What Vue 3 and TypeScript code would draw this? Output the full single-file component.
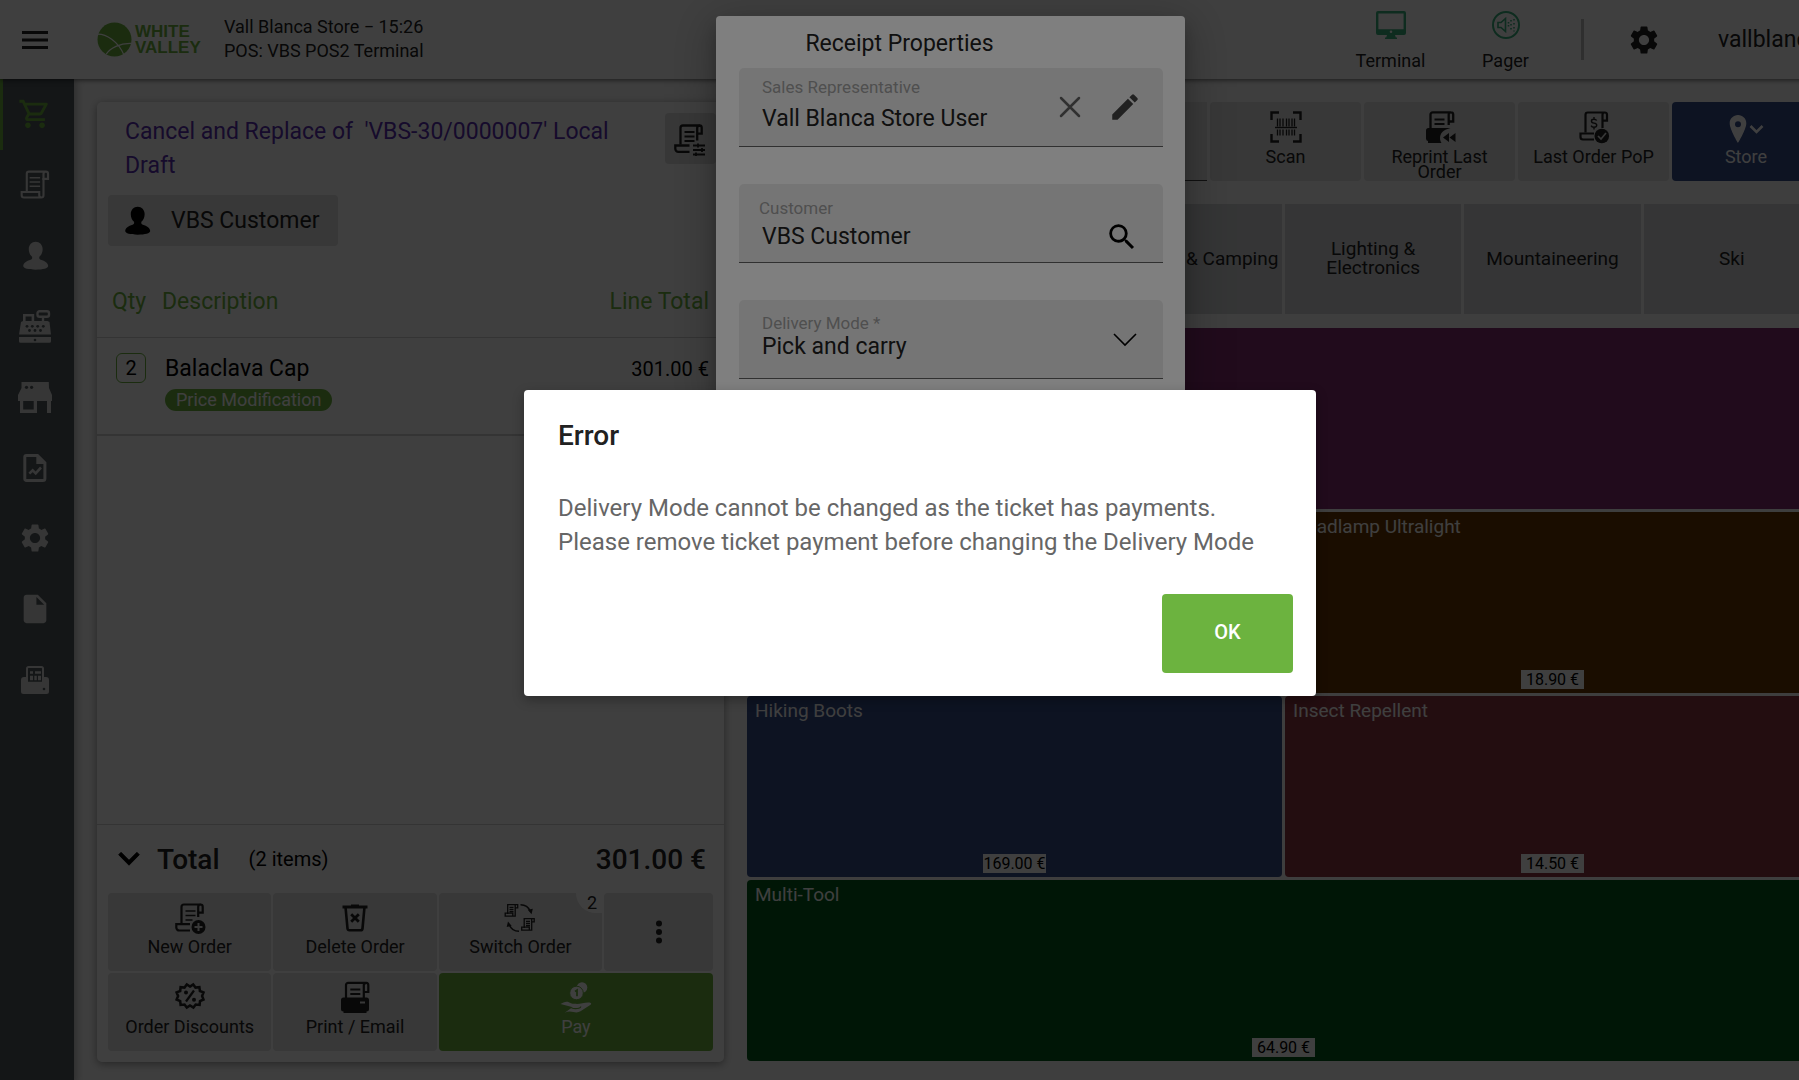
<script setup lang="ts">
import { ref } from 'vue'

interface NavItem {
  icon: string
  label: string
}

interface Product {
  name: string
  price: string
  color: string
  wide?: boolean
}

const navItems: NavItem[] = [
  { icon: 'cart', label: 'Sale' },
  { icon: 'scroll', label: 'Orders' },
  { icon: 'person', label: 'Customers' },
  { icon: 'register', label: 'Cash register' },
  { icon: 'store', label: 'Store' },
  { icon: 'report', label: 'Reports' },
  { icon: 'gear', label: 'Settings' },
  { icon: 'file', label: 'Documents' },
  { icon: 'fiscal', label: 'Fiscal printer' },
]

const tools: NavItem[] = [
  { icon: 'scan', label: 'Scan' },
  { icon: 'reprint', label: 'Reprint Last Order' },
  { icon: 'pop', label: 'Last Order PoP' },
]

const categories: string[] = [
  'Best Sellers',
  'Clothing',
  'Trekking & Camping',
  'Lighting & Electronics',
  'Mountaineering',
  'Ski',
]

const products: Product[] = [
  { name: 'Balaclava Cap', price: '150.50 €', color: '#842c70', wide: true },
  { name: 'Headlamp', price: '24.90 €', color: '#683400' },
  { name: 'Headlamp Ultralight', price: '18.90 €', color: '#683400' },
  { name: 'Hiking Boots', price: '169.00 €', color: '#344c88' },
  { name: 'Insect Repellent', price: '14.50 €', color: '#8c3440' },
  { name: 'Multi-Tool', price: '64.90 €', color: '#005818', wide: true },
]

const salesRep = ref('Vall Blanca Store User')
const customer = ref('VBS Customer')
const delivery = ref('Pick and carry')
</script>

<template>
  <div class="app">
    <svg class="sprite" aria-hidden="true">
      <symbol id="menu" viewBox="0 0 34 34">
        <path d="M4 9.500h26M4 17h26M4 24.500h26" stroke="currentColor" stroke-width="3" />
      </symbol>
      <symbol id="cart" viewBox="0 0 24 24">
        <path fill="currentColor" d="M15.550 13c.75 0 1.410-.41 1.750-1.030l3.580-6.490A.996.996 0 0 0 20.010 4H5.210l-.94-2H1v2h2l3.600 7.590-1.350 2.440C4.520 15.370 5.480 17 7 17h12v-2H7l1.100-2h7.450zM6.160 6h12.150l-2.760 5H8.530L6.160 6zM7 18c-1.100 0-1.990.9-1.990 2S5.900 22 7 22s2-.9 2-2-.9-2-2-2zm10 0c-1.100 0-1.990.9-1.990 2s.89 2 1.990 2 2-.9 2-2-.9-2-2-2z" />
      </symbol>
      <symbol id="scroll" viewBox="0 0 24 24">
        <g fill="none" stroke="currentColor" stroke-width="1.500">
          <path d="M6.200 16.800V4.100a1.500 1.500 0 0 1 1.500-1.500h12a1.500 1.500 0 0 1 1.500 1.500v3.600H18V4.200a1.600 1.600 0 0 1 1.600-1.600" />
          <path d="M18 7v12.200a1.600 1.600 0 0 1-1.600 1.600H4.200a1.600 1.600 0 0 1-1.600-1.600v-2.300H15v2.400a1.500 1.500 0 0 0 1.500 1.500" />
          <path d="M8.200 6.900h7.400M8.200 9.900h7.400M8.200 12.900h7.400" stroke-width="1.100" />
        </g>
      </symbol>
      <symbol id="person" viewBox="0 0 24 24">
        <path fill="currentColor" d="M12.500 2c2.800 0 4.900 2.200 4.900 5.200 0 2.300-1 4.200-2.300 5.400-.3 1.200.1 1.800 1 2.100 2.900.7 5.200 2.400 5.200 4.400 0 1.600-3.600 2.600-8.800 2.600s-8.800-1-8.800-2.600c0-2 2.300-3.700 5.200-4.400.9-.3 1.300-.9 1-2.100-1.300-1.200-2.300-3.100-2.300-5.400C7.600 4.200 9.700 2 12.500 2z" />
      </symbol>
      <symbol id="register" viewBox="0 0 34 34">
        <g fill="none" stroke="currentColor">
          <rect x="19.500" y="2.200" width="11.500" height="5.600" rx="2" stroke-width="2.400" />
          <path d="M25 8v5" stroke-width="2.400" />
          <path d="M6.300 14V6.300h8.600V14" stroke-width="2.600" />
        </g>
        <path fill="currentColor" d="M5 12h24.500l2 1L33 25.500H1L3 13zM1 28h32v4.200a1.500 1.500 0 0 1-1.500 1.500h-29A1.500 1.500 0 0 1 1 32.200z" />
        <g fill="var(--hole)">
          <circle cx="9" cy="17.300" r="1.400" /><circle cx="14.300" cy="17.300" r="1.400" /><circle cx="19.700" cy="17.300" r="1.400" /><circle cx="25.300" cy="17.300" r="1.400" />
          <circle cx="11.500" cy="21.500" r="1.400" /><circle cx="17" cy="21.500" r="1.400" /><circle cx="22.500" cy="21.500" r="1.400" /><circle cx="17" cy="31" r="1.300" />
        </g>
      </symbol>
      <symbol id="store" viewBox="0 0 34 34">
        <path fill="currentColor" fill-rule="evenodd" d="M3.500 2h27.300L31 8l3 7v6h-1v12h-4V21H19v12H2V21H0v-6l3.500-7zM5.200 21v8.500h10.500V21z" />
        <circle cx="8.500" cy="7.300" r="1.600" fill="var(--hole)" /><circle cx="13.600" cy="7.300" r="1.600" fill="var(--hole)" />
      </symbol>
      <symbol id="report" viewBox="0 0 34 34">
        <path d="M8.300 4.500h11.200l7.400 7.400v15.600a2 2 0 0 1-2 2H8.300a1.500 1.500 0 0 1-1.500-1.500V6a1.500 1.500 0 0 1 1.500-1.500z" fill="none" stroke="currentColor" stroke-width="3" />
        <path d="M18.300 4l9 9h-9z" fill="currentColor" />
        <path d="M11.300 22.700l3.400-3.400 3 3 5.300-5.800" fill="none" stroke="currentColor" stroke-width="2.600" />
      </symbol>
      <symbol id="gear" viewBox="0 0 24 24">
        <path fill="currentColor" d="M19.140 12.940c.04-.3.060-.61.060-.94 0-.32-.02-.64-.07-.94l2.030-1.580a.49.49 0 0 0 .12-.61l-1.920-3.320a.488.488 0 0 0-.59-.22l-2.390.96c-.5-.38-1.030-.7-1.620-.94l-.36-2.540a.484.484 0 0 0-.48-.41h-3.840c-.24 0-.43.17-.47.41l-.36 2.540c-.59.24-1.130.57-1.620.94l-2.390-.96c-.22-.08-.47 0-.59.22L2.740 8.870c-.12.21-.08.47.12.61l2.030 1.580c-.05.3-.09.63-.09.94s.02.64.07.94l-2.030 1.580a.49.49 0 0 0-.12.61l1.920 3.320c.12.22.37.29.59.22l2.390-.96c.5.38 1.030.7 1.620.94l.36 2.540c.05.24.24.41.48.41h3.840c.24 0 .44-.17.47-.41l.36-2.540c.59-.24 1.130-.56 1.620-.94l2.390.96c.22.08.47 0 .59-.22l1.920-3.320c.12-.22.07-.47-.12-.61l-2.010-1.580zM12 15.600c-1.980 0-3.600-1.620-3.600-3.600s1.620-3.600 3.600-3.600 3.600 1.620 3.600 3.600-1.620 3.600-3.600 3.600z" />
      </symbol>
      <symbol id="file" viewBox="0 0 24 24">
        <path fill="currentColor" d="M6 2c-1.100 0-2 .9-2 2v16c0 1.100.9 2 2 2h12c1.100 0 2-.9 2-2V8l-6-6H6zm7 7V3.500L18.500 9H13z" />
      </symbol>
      <symbol id="fiscal" viewBox="0 0 34 34">
        <path fill="currentColor" d="M6 14h22a3 3 0 0 1 3 3v11.500a2.500 2.500 0 0 1-2.500 2.500H5.500A2.500 2.500 0 0 1 3 28.500V17a3 3 0 0 1 3-3z" />
        <path d="M9 19.800V5.600A1.600 1.600 0 0 1 10.600 4h12.800A1.600 1.600 0 0 1 25 5.600v14.200z" fill="var(--hole)" stroke="currentColor" stroke-width="2" />
        <path d="M12 9.500h3M17 9.500h6" stroke="currentColor" stroke-width="2.400" />
        <path d="M12 15h3M16.300 15h2.500M20 15h3" stroke="currentColor" stroke-width="4.400" />
        <circle cx="26" cy="26" r="1.300" fill="var(--hole)" />
      </symbol>
      <symbol id="new-order" viewBox="0 0 34 34">
        <g fill="none" stroke="currentColor" stroke-width="2.200">
          <path d="M8.500 22.500V6a2.500 2.500 0 0 1 2.500-2.500h16.500A2.200 2.200 0 0 1 29.700 5.700v6h-4.500V6a2.500 2.500 0 0 1 2.500-2.500M25.200 10v6" />
          <path d="M17 23.200H3.300v3.300a3 3 0 0 0 3 3H17" />
          <path d="M12.500 10h10M12.500 14.500h10M12.500 19h7" stroke-width="1.600" />
        </g>
        <circle cx="25.500" cy="26" r="7" fill="currentColor" />
        <path d="M25.500 22v8M21.500 26h8" stroke="var(--hole)" stroke-width="2" />
      </symbol>
      <symbol id="trash" viewBox="0 0 34 34">
        <path d="M4.500 6h25" stroke="currentColor" stroke-width="3" />
        <path d="M13 3.500h8v2h-8z" fill="currentColor" />
        <path d="M7.500 6l2 21.500a2 2 0 0 0 2 1.800h11a2 2 0 0 0 2-1.800l2-21.500" fill="none" stroke="currentColor" stroke-width="2.600" />
        <path d="M13.200 13.200l7.600 7.600M20.800 13.200l-7.600 7.600" stroke="currentColor" stroke-width="2.800" />
      </symbol>
      <symbol id="switch" viewBox="0 0 34 34">
        <g id="mini-scroll" fill="none" stroke="currentColor" stroke-width="1.300">
          <path d="M4.700 13V3.600h10v3.300h-2.500V3.600M12.200 6v9.200h-10v-3h7.600v2.600M6.500 6.400h4M6.500 8.500h4M6.500 10.600h4" />
        </g>
        <use href="#mini-scroll" x="16.500" y="14" />
        <g fill="none" stroke="currentColor" stroke-width="1.500">
          <path d="M17.500 3.800c4.500 0 8.200 2.600 9.700 6.500M16 30.200c-4.500 0-8.200-2.600-9.700-6.500" />
        </g>
        <path d="M24.800 8.800l5-1-1.300 5.500zM8.700 25l-5 1L5 20.500z" fill="currentColor" />
      </symbol>
      <symbol id="discount" viewBox="0 0 34 34">
        <path d="M17 5.600l3.200-2.100 2.300 3.100 3.900-.4.500 3.800 3.600 1.400-1.400 3.600 1.400 3.500-3.500 1.600-.4 3.800-3.900-.4-2.300 3.100-3.400-2.100-3.200 2.100-2.300-3.100-3.900.4-.4-3.800-3.600-1.600 1.500-3.500-1.500-3.600 3.600-1.400.4-3.800 3.900.4 2.300-3.100z" fill="none" stroke="currentColor" stroke-width="2.500" />
        <path d="M21 9.500l-8 11" stroke="currentColor" stroke-width="2.200" />
        <circle cx="13" cy="11.500" r="2" fill="currentColor" /><circle cx="21" cy="18.700" r="2" fill="currentColor" />
      </symbol>
      <symbol id="print" viewBox="0 0 34 34">
        <path d="M8 18V4a2.200 2.200 0 0 1 2.200-2.200h18A2.200 2.200 0 0 1 30.300 4v7h-4.500V4.300a2.200 2.200 0 0 1 2.200-2.200M25.800 10v7" fill="none" stroke="currentColor" stroke-width="2.200" />
        <path d="M12.300 8.500h10M12.300 13h10" stroke="currentColor" stroke-width="1.800" />
        <path d="M5.500 16.500h23a2.500 2.500 0 0 1 2.500 2.500v9a2.500 2.500 0 0 1-2.500 2.500V32h-23v-1.500A2.500 2.500 0 0 1 3 28v-9a2.500 2.500 0 0 1 2.500-2.500z" fill="currentColor" />
        <path d="M22 21.500h5" stroke="var(--hole)" stroke-width="2" />
      </symbol>
      <symbol id="pay" viewBox="0 0 34 34">
        <circle cx="23" cy="6.500" r="5.300" fill="currentColor" />
        <circle cx="17.500" cy="12" r="6.800" fill="currentColor" stroke="var(--hole)" stroke-width="1" />
        <path d="M16 10.500l2-1.300v6" fill="none" stroke="var(--hole)" stroke-width="1.800" />
        <path d="M1.500 23l3-1.500c3-1.500 5-.8 7.500.8 1.500.8 5 .2 6.500 1 1.600.9 1 2.700-.8 2.700H13M18 23c3.500 0 9-2 12.500-1.500 2.200.4 2.200 1.600.3 2.800l-9.300 6c-2.200 1.300-4.500 1.400-7 .7-3.500-1-6-.6-8.800.7z" fill="currentColor" />
        <path d="M12.500 27c3.500 1 9 .8 9.300-1.500" fill="none" stroke="var(--hole)" stroke-width="1.200" />
      </symbol>
      <symbol id="order-settings" viewBox="0 0 34 34">
        <g fill="none" stroke="currentColor" stroke-width="2.300">
          <path d="M8.500 22.500V6A2.500 2.500 0 0 1 11 3.500h16.500a2.200 2.200 0 0 1 2.200 2.200v6h-4.500V6a2.500 2.500 0 0 1 2.500-2.500M25.200 10v8.500" />
          <path d="M17.500 23.500H3.300v3.300a3 3 0 0 0 3 3h11.200" />
          <path d="M12.500 10h10M12.500 14.500h10M12.500 19h10" stroke-width="1.800" />
          <path d="M21 23.500h12M21 28h12M21 32.500h12M26 21.500v4M30 26v4M24 30.500v3.500" stroke-width="1.800" />
        </g>
      </symbol>
      <symbol id="scan" viewBox="0 0 34 34">
        <path d="M2.500 10V2.500H10M24 2.500h7.500V10M31.500 24v7.500H24M10 31.500H2.500V24" fill="none" stroke="currentColor" stroke-width="2.400" />
        <path d="M6 17.500h22" stroke="currentColor" stroke-width="1.400" />
        <path d="M8.500 8.500v8M11 8.500v8M14 8.500v8M17.500 8.500v8M20 8.500v8M23 8.500v8M25.500 8.500v8M8.500 19.500v6M11 19.500v6M14 19.500v6M17.500 19.500v6M20 19.500v6M23 19.500v6M25.500 19.500v6" stroke="currentColor" stroke-width="1.300" />
      </symbol>
      <symbol id="reprint" viewBox="0 0 34 34">
        <path d="M7.500 18V4.500a2.200 2.200 0 0 1 2.200-2.200H28a2.200 2.200 0 0 1 2.200 2.200v7h-4.500v-7A2.200 2.200 0 0 1 28 2.300M25.700 10v5" fill="none" stroke="currentColor" stroke-width="2.300" />
        <path d="M11.500 9.500h10M11.500 14h10" stroke="currentColor" stroke-width="1.800" />
        <path d="M5.500 18h22l-4.500 1.500a9 9 0 0 0-4.500 13.500H5V31a2.500 2.500 0 0 1-2-2.500V20.500A2.500 2.500 0 0 1 5.500 18z" fill="currentColor" />
        <path d="M26 23v9l-6-4.500zM32.500 23v9l-6-4.500z" fill="currentColor" />
      </symbol>
      <symbol id="pop" viewBox="0 0 34 34">
        <g fill="none" stroke="currentColor" stroke-width="2.200">
          <path d="M8.500 22.500V4.800A2.300 2.300 0 0 1 10.800 2.500h17a2.200 2.200 0 0 1 2.200 2.200v6h-4.500v-6A2.200 2.200 0 0 1 27.700 2.500M25.500 9v9" />
          <path d="M17 23.500H3.500V27a2.500 2.500 0 0 0 2.500 2.500h11" />
          <path d="M19.700 10.500c-.6-1-1.500-1.300-2.700-1.300-3.300 0-3.500 3.400 0 3.900 3.800.5 3.500 4.100 0 4.100-1.400 0-2.400-.5-2.900-1.600M17 7v2M17 17v2.500" stroke-width="1.400" />
        </g>
        <circle cx="24.800" cy="26" r="7.300" fill="currentColor" />
        <path d="M21 26l3 3 5-6" fill="none" stroke="var(--hole)" stroke-width="1.700" />
      </symbol>
      <symbol id="pin" viewBox="0 0 46 34">
        <path fill="currentColor" fill-rule="evenodd" d="M15 5c-4.700 0-8.300 3.600-8.300 8.300C6.700 19.500 15 33 15 33s8.300-13.500 8.300-19.700C23.300 8.600 19.700 5 15 5zm0 6.300a3 3 0 1 1 0 6 3 3 0 0 1 0-6z" />
        <path d="M27.500 16l6 6 6-6" fill="none" stroke="currentColor" stroke-width="2.600" />
      </symbol>
      <symbol id="monitor" viewBox="0 0 34 34">
        <path fill="currentColor" fill-rule="evenodd" d="M4 3h26a2 2 0 0 1 2 2v20a2 2 0 0 1-2 2h-9l.8 2.500H23V31H11v-1.500h1.200L13 27H4a2 2 0 0 1-2-2V5a2 2 0 0 1 2-2zm.4 2.400v15.800h25.200V5.400zM17 22.500a1.300 1.300 0 1 0 0 2.600 1.300 1.300 0 0 0 0-2.600z" />
      </symbol>
      <symbol id="pager" viewBox="0 0 34 34">
        <circle cx="17" cy="17" r="13" fill="none" stroke="currentColor" stroke-width="2" />
        <path d="M9 14.500h3l4.500-4v13l-4.500-4H9z" fill="none" stroke="currentColor" stroke-width="1.600" />
        <path d="M19.500 14v1.500M19.500 17v1.500M22 12v1.500M22 16v1.500M22 20v1.500M25 11v1.500M25 15v1.500M25 19v1.500M25 22.500v1" stroke="currentColor" stroke-width="1.600" />
      </symbol>
      <symbol id="edit" viewBox="0 0 24 24">
        <path fill="currentColor" d="M3 17.250V21h3.750L17.810 9.940l-3.750-3.750L3 17.250zM20.710 7.040a.996.996 0 0 0 0-1.410l-2.340-2.340a.996.996 0 0 0-1.410 0l-1.830 1.830 3.750 3.750 1.830-1.830z" />
      </symbol>
      <symbol id="clear" viewBox="0 0 34 34">
        <path d="M8 8l18 18M26 8L8 26" stroke="currentColor" stroke-width="2.500" stroke-linecap="round" />
      </symbol>
      <symbol id="search" viewBox="0 0 24 24">
        <path fill="currentColor" d="M15.500 14h-.79l-.28-.27A6.471 6.471 0 0 0 16 9.500 6.500 6.500 0 1 0 9.500 16c1.610 0 3.090-.59 4.230-1.570l.27.28v.79l5 4.990L20.490 19l-4.990-5zm-6 0C7.010 14 5 11.990 5 9.500S7.010 5 9.500 5 14 7.010 14 9.500 11.990 14 9.500 14z" />
      </symbol>
      <symbol id="chevron" viewBox="0 0 34 34">
        <path d="M6 12l11 11 11-11" fill="none" stroke="currentColor" stroke-width="1.600" />
      </symbol>
      <symbol id="expand" viewBox="0 0 24 24">
        <path fill="currentColor" d="M17.600 7.300L12 12.900 6.400 7.300 4.700 9l7.300 7.400L19.300 9z" stroke="currentColor" stroke-width=".6" />
      </symbol>
      <symbol id="more" viewBox="0 0 34 34">
        <circle cx="17" cy="8.500" r="3" fill="currentColor" /><circle cx="17" cy="17" r="3" fill="currentColor" /><circle cx="17" cy="25.500" r="3" fill="currentColor" />
      </symbol>
    </svg>

    <header class="topbar">
      <button class="plain menu" type="button" aria-label="Menu"><svg class="icon"><use href="#menu" /></svg></button>
      <a class="logo" href="#">
        <svg class="globe" viewBox="0 0 36 36" aria-hidden="true">
          <circle cx="18" cy="18" r="17.500" fill="#6cb33f" />
          <g fill="none" stroke="#fff" stroke-width="1.200">
            <path d="M0 12.500c9-.5 22 7 28 22M9.500 33c4-6 14-11.500 26-11" />
          </g>
        </svg>
        <span>WHITE<br>VALLEY</span>
      </a>
      <p class="terminal-info">Vall Blanca Store − 15:26<br>POS: VBS POS2 Terminal</p>
      <div class="status">
        <button class="plain device" type="button"><svg class="icon"><use href="#monitor" /></svg><span>Terminal</span></button>
        <button class="plain device" type="button"><svg class="icon"><use href="#pager" /></svg><span>Pager</span></button>
        <i class="rule"></i>
        <button class="plain config" type="button" aria-label="Configuration"><svg class="icon"><use href="#gear" /></svg></button>
        <span class="user">vallblanca</span>
      </div>
    </header>

    <div class="body">
      <nav class="sidebar">
        <div class="nav-list">
          <a v-for="(item, i) in navItems" :key="item.icon" href="#" :class="{ active: i === 0 }" :aria-label="item.label">
            <svg class="icon"><use :href="'#' + item.icon" /></svg>
          </a>
        </div>
      </nav>

      <main class="workspace">
        <section class="ticket">
          <div class="ticket-head">
            <h1>Cancel and Replace of&nbsp; 'VBS-30/0000007' Local Draft</h1>
            <button class="tile square" type="button" aria-label="Receipt properties"><svg class="icon"><use href="#order-settings" /></svg></button>
          </div>
          <button class="tile customer" type="button"><svg class="icon"><use href="#person" /></svg>VBS Customer</button>
          <table>
            <thead>
              <tr><th class="qty">Qty</th><th>Description</th><th class="amount">Line Total</th></tr>
            </thead>
            <tbody>
              <tr>
                <td class="qty"><span class="count">2</span></td>
                <td class="desc">Balaclava Cap<span class="tag">Price Modification</span></td>
                <td class="amount">301.00 €</td>
              </tr>
            </tbody>
          </table>
          <div class="total">
            <button class="plain" type="button" aria-label="Expand totals"><svg class="icon"><use href="#expand" /></svg></button>
            <strong>Total</strong>
            <span>(2 items)</span>
            <strong class="sum">301.00 €</strong>
          </div>
          <div class="actions">
            <button class="tile action" type="button"><svg class="icon"><use href="#new-order" /></svg><span>New Order</span></button>
            <button class="tile action" type="button"><svg class="icon"><use href="#trash" /></svg><span>Delete Order</span></button>
            <button class="tile action" type="button"><svg class="icon"><use href="#switch" /></svg><span>Switch Order</span><b class="badge">2</b></button>
            <button class="tile more" type="button" aria-label="More"><svg class="icon"><use href="#more" /></svg></button>
            <button class="tile action" type="button"><svg class="icon"><use href="#discount" /></svg><span>Order Discounts</span></button>
            <button class="tile action" type="button"><svg class="icon"><use href="#print" /></svg><span>Print / Email</span></button>
            <button class="tile action pay" type="button"><svg class="icon"><use href="#pay" /></svg><span>Pay</span></button>
          </div>
        </section>

        <section class="catalog">
          <div class="tools">
            <input class="lookup" type="text" aria-label="Search product">
            <button v-for="tool in tools" :key="tool.icon" class="tile action" type="button">
              <svg class="icon"><use :href="'#' + tool.icon" /></svg><span>{{ tool.label }}</span>
            </button>
            <button class="tile action store" type="button"><svg class="icon wide"><use href="#pin" /></svg><span>Store</span></button>
          </div>
          <div class="categories">
            <button v-for="name in categories" :key="name" type="button">{{ name }}</button>
          </div>
          <div class="products">
            <button v-for="p in products" :key="p.name" type="button" :class="{ wide: p.wide }" :style="{ backgroundColor: p.color }">
              <span class="name">{{ p.name }}</span>
              <span class="price">{{ p.price }}</span>
            </button>
          </div>
        </section>
      </main>
    </div>

    <div class="backdrop properties-layer">
      <form class="properties" @submit.prevent>
        <h2>Receipt Properties</h2>
        <div class="field rep">
          <label for="rep">Sales Representative</label>
          <input id="rep" v-model="salesRep" type="text">
          <div class="field-icons">
            <button class="plain grey" type="button" aria-label="Clear"><svg class="icon"><use href="#clear" /></svg></button>
            <button class="plain dark" type="button" aria-label="Edit"><svg class="icon"><use href="#edit" /></svg></button>
          </div>
        </div>
        <div class="field cust">
          <label for="cust">Customer</label>
          <input id="cust" v-model="customer" type="text">
          <div class="field-icons">
            <button class="plain" type="button" aria-label="Search"><svg class="icon"><use href="#search" /></svg></button>
          </div>
        </div>
        <div class="field mode">
          <label for="mode">Delivery Mode *</label>
          <select id="mode" v-model="delivery"><option>Pick and carry</option></select>
          <div class="field-icons"><svg class="icon"><use href="#chevron" /></svg></div>
        </div>
      </form>
    </div>

    <div class="backdrop error-layer">
      <div class="error" role="alertdialog" aria-labelledby="error-title" aria-describedby="error-text">
        <h2 id="error-title">Error</h2>
        <p id="error-text">Delivery Mode cannot be changed as the ticket has payments.<br>Please remove ticket payment before changing the Delivery Mode</p>
        <button type="button">OK</button>
      </div>
    </div>
  </div>
</template>

<style>
body {
  overflow: hidden;
}
</style>

<style scoped>
* {
  box-sizing: border-box;
  margin: 0;
}
.app {
  --green: #6cb33f;
  --hole: #e0e0e0;
  position: relative;
  display: flex;
  flex-direction: column;
  width: calc(100vw + 41px);
  height: calc(100vh + 5px);
  background: #fafafa;
  color: #212121;
  font-family: Roboto, sans-serif;
  font-size: 23px;
}
button,
input,
select {
  font: inherit;
  color: inherit;
  border: 0;
  padding: 0;
}
a {
  color: inherit;
  text-decoration: none;
}
.sprite {
  position: absolute;
  width: 0;
  height: 0;
}
.icon {
  display: block;
  flex: none;
  width: 34px;
  height: 34px;
}
.icon.wide {
  width: 46px;
}
.plain {
  background: none;
}

/* top bar */
.topbar {
  position: relative;
  z-index: 2;
  display: flex;
  align-items: center;
  flex: none;
  height: 79px;
  background: #fff;
  box-shadow: 0 1px 5px rgba(0, 0, 0, 0.6);
}
.menu {
  width: 74px;
  padding-left: 18px;
}
.logo {
  display: flex;
  align-items: center;
  gap: 3px;
  width: 127px;
  margin-left: 23px;
  color: var(--green);
  font: bold 17px/16px "Liberation Sans", sans-serif;
}
.globe {
  width: 35px;
  height: 35px;
}
.terminal-info {
  padding-bottom: 2px;
  font-size: 18px;
  line-height: 24px;
}
.status {
  display: flex;
  align-items: center;
  margin-left: auto;
}
.device {
  display: flex;
  flex-direction: column;
  align-items: center;
  gap: 9px;
  width: 115px;
  font-size: 18px;
  line-height: 20px;
}
.device .icon {
  color: #38b07c;
}
.rule {
  width: 3px;
  height: 41px;
  margin-left: 18px;
  background: #bdbdbd;
}
.config {
  display: flex;
  justify-content: center;
  width: 120px;
}
.user {
  width: 136px;
  padding-left: 14px;
}

/* side navigation */
.body {
  display: flex;
  flex: 1;
  min-height: 0;
}
.sidebar {
  --hole: #50585c;
  flex: none;
  width: 74px;
  background: #50585c;
  color: #d8d8d8;
  box-shadow: 2px 0 8px rgba(0, 0, 0, 0.3);
}
.nav-list {
  display: grid;
  grid-auto-rows: 1fr;
  height: 636px;
}
.nav-list a {
  display: flex;
  align-items: center;
  padding-left: 15px;
  border-left: 3px solid transparent;
}
.nav-list .active {
  border-color: var(--green);
  color: var(--green);
}

/* ticket */
.workspace {
  display: grid;
  grid-template-columns: 627fr 1073fr;
  gap: 23px;
  flex: 1;
  min-width: 0;
  padding: 23px 20px 23px 23px;
}
.ticket {
  display: flex;
  flex-direction: column;
  background: #fff;
  border-radius: 5px;
  box-shadow: 0 2px 8px rgba(0, 0, 0, 0.4);
}
.tile {
  background: #e0e0e0;
  border-radius: 4px;
}
.ticket-head {
  display: flex;
  justify-content: space-between;
  align-items: flex-start;
  padding: 11px 8px 0 28px;
}
h1 {
  max-width: 500px;
  padding-top: 2px;
  font-size: 23px;
  font-weight: 400;
  line-height: 34px;
  color: #5a2eb0;
}
.square {
  display: flex;
  align-items: center;
  justify-content: center;
  width: 51px;
  height: 51px;
  padding-right: 4px;
}
.customer {
  display: flex;
  align-items: center;
  align-self: flex-start;
  gap: 17px;
  height: 51px;
  margin: 12px 0 0 11px;
  padding: 0 19px 0 12px;
}
.customer .icon {
  color: #000;
}
table {
  width: 100%;
  border-collapse: collapse;
}
th {
  padding: 39px 0 18px;
  border-bottom: 1px solid #d0d0d0;
  color: var(--green);
  font-weight: 400;
  line-height: 34px;
  text-align: left;
}
td {
  padding: 15px 0 23px;
  border-bottom: 2px solid #d0d0d0;
  color: #000;
  line-height: 32px;
  vertical-align: top;
}
.qty {
  width: 65px;
  padding-left: 15px;
}
td.qty {
  padding-left: 19px;
}
.desc {
  padding-left: 3px;
}
.amount {
  padding-right: 15px;
  text-align: right;
}
td.amount {
  font-size: 20px;
}
.count {
  display: block;
  width: 30px;
  height: 30px;
  border: 1px solid var(--green);
  border-radius: 6px;
  font-size: 20px;
  line-height: 28px;
  text-align: center;
}
.tag {
  display: block;
  width: fit-content;
  margin-top: 4px;
  padding: 0 11px;
  border-radius: 11px;
  background: var(--green);
  color: #fff;
  font-size: 18px;
  line-height: 22px;
}
.total {
  display: flex;
  align-items: center;
  height: 69px;
  margin-top: auto;
  padding: 0 18px 0 15px;
  border-top: 1px solid #d0d0d0;
  color: #000;
  font-size: 20px;
}
.total strong {
  margin: 0 29px 0 11px;
  color: #212121;
  font-size: 28px;
  font-weight: 500;
}
.total .sum {
  margin: 0 0 0 auto;
}
.actions {
  display: grid;
  grid-template-columns: 3fr 3fr 3fr 2fr;
  gap: 2px;
  padding: 0 11px 11px;
}
.action {
  position: relative;
  display: flex;
  flex-direction: column;
  align-items: center;
  gap: 4px;
  height: 78px;
  padding: 8px 8px 0;
  font-size: 18px;
  line-height: 15px;
}
.more {
  display: flex;
  align-items: center;
  justify-content: center;
}
.pay {
  --hole: var(--green);
  grid-column: span 2;
  background: var(--green);
  color: #fff;
}
.badge {
  position: absolute;
  top: 0;
  right: 0;
  width: 26px;
  padding-left: 6px;
  border-radius: 0 0 0 22px;
  background: #fff;
  font-weight: 400;
  line-height: 20px;
  text-align: center;
}

/* catalog */
.catalog {
  display: flex;
  flex-direction: column;
  min-width: 0;
  padding-bottom: 1px;
}
.tools {
  display: flex;
  gap: 3px;
}
.lookup {
  flex: 1;
  min-width: 0;
  background: #e8e8e8;
  border-bottom: 1px solid #424242;
}
.tools .action {
  gap: 5px;
  width: 151px;
  height: 79px;
}
.tools .store {
  width: 148px;
  background: #344c88;
  color: #fff;
}
.categories {
  display: grid;
  grid-template-columns: repeat(6, 1fr);
  gap: 3px;
  margin-top: 23px;
}
.categories button {
  height: 110px;
  padding-bottom: 2px;
  background: #d5d6d9;
  font-size: 19px;
  line-height: 19px;
}
.products {
  display: grid;
  grid-template-columns: 1fr 1fr;
  grid-auto-rows: 1fr;
  gap: 3px;
  flex: 1;
  margin-top: 14px;
}
.products button {
  display: flex;
  flex-direction: column;
  justify-content: space-between;
  align-items: center;
  padding: 3px 8px 4px;
  border-radius: 4px;
  color: #fff;
}
.products .wide {
  grid-column: span 2;
}
.name {
  align-self: flex-start;
  font-size: 19px;
  line-height: 24px;
}
.price {
  min-width: 63px;
  background: #fff;
  color: #000;
  font-size: 16px;
  line-height: 19px;
}

/* dialogs */
.backdrop {
  position: absolute;
  inset: 0;
  z-index: 3;
  display: flex;
  justify-content: center;
  background: rgba(0, 0, 0, 0.5);
}
.properties-layer {
  align-items: flex-start;
  padding: 16px 0 0 61px;
}
.properties {
  display: flex;
  flex-direction: column;
  gap: 37px;
  width: 469px;
  padding: 0 22px 23px 23px;
  border-radius: 4px;
  background: #fff;
  box-shadow: 0 11px 15px rgba(0, 0, 0, 0.2), 0 9px 46px 8px rgba(0, 0, 0, 0.2);
}
.properties h2 {
  margin-bottom: -37px;
  padding: 11px 103px 7px 0;
  font-size: 23px;
  font-weight: 400;
  line-height: 34px;
  text-align: center;
}
.field {
  position: relative;
  display: flex;
  flex-direction: column;
  height: 79px;
  padding-left: 23px;
  border-radius: 5px 5px 0 0;
  border-bottom: 1px solid #616161;
  background: #ebebeb;
}
.field label {
  color: #9e9e9e;
  font-size: 17px;
  line-height: 20px;
}
.field input,
.field select {
  appearance: none;
  width: 300px;
  height: 28px;
  background: none;
  line-height: 28px;
}
.rep {
  gap: 8px;
  padding-top: 9px;
}
.cust {
  gap: 5px;
  padding-top: 14px;
}
.cust label {
  margin-left: -3px;
}
.mode {
  padding-top: 13px;
}
.field-icons {
  position: absolute;
  top: 0;
  right: 21px;
  bottom: 0;
  display: flex;
  align-items: center;
  gap: 21px;
  color: #000;
}
.cust .field-icons {
  top: 36px;
  right: 24px;
  bottom: auto;
}
.grey {
  color: #616161;
}
.dark {
  color: #424242;
}
.error-layer {
  z-index: 4;
  align-items: center;
}
.error {
  display: flex;
  flex-direction: column;
  width: 792px;
  padding: 28px 23px 23px 34px;
  border-radius: 4px;
  background: #fff;
  box-shadow: 0 4px 12px rgba(0, 0, 0, 0.3);
}
.error h2 {
  font-size: 28px;
  font-weight: 500;
  line-height: 36px;
}
.error p {
  margin: 37px 0 35px;
  color: #666;
  font-size: 24px;
  line-height: 34px;
}
.error button {
  align-self: flex-end;
  width: 131px;
  height: 79px;
  padding-bottom: 3px;
  border-radius: 4px;
  background: var(--green);
  color: #fff;
  font-size: 20px;
  font-weight: 500;
}
</style>
